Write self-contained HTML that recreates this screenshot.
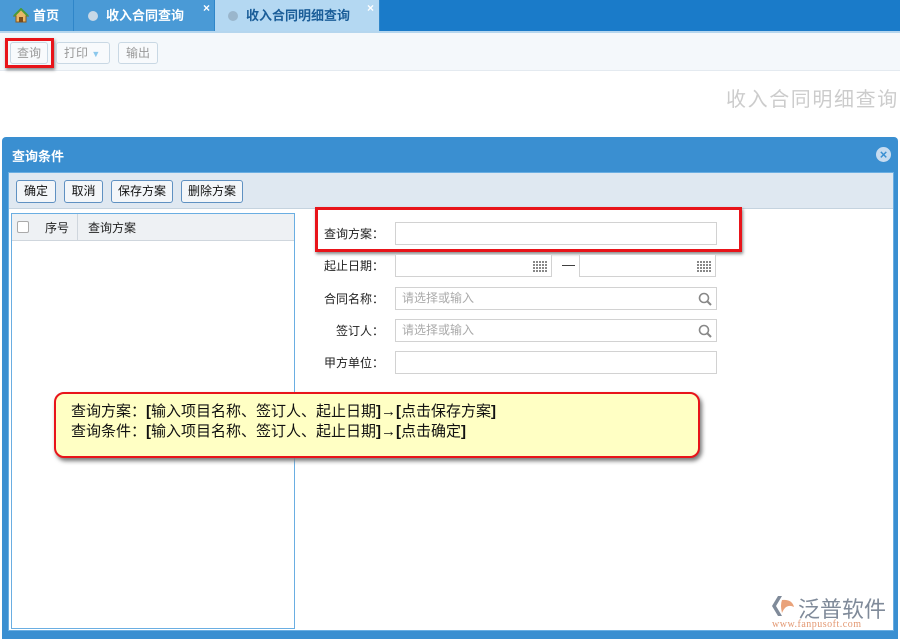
<!DOCTYPE html>
<html><head><meta charset="utf-8"><style>
*{margin:0;padding:0;box-sizing:border-box}
body{width:900px;height:640px;background:#fff;position:relative;overflow:hidden;font-family:"Liberation Sans","Noto Sans CJK SC",sans-serif;font-size:12px;color:#222}
.abs{position:absolute}
.tabbar{left:0;top:0;width:900px;height:31px;background:#1a7bc9}
.tab{top:0;height:31px;font-weight:bold;font-size:13px;line-height:32px;color:#fff;background:#4a9ad6;border-right:1px solid #2f86c9}
.tb{top:31px;left:0;width:900px;height:40px;background:#f4f8fb;border-top:2px solid #b5d6ee;border-bottom:1px solid #e4eaf0}
.btn{height:22px;border:1px solid #c9d8e4;border-radius:3px;color:#999;font-size:12px;line-height:20px;text-align:center;background:#f8fafc}
.dlg{left:2px;top:137px;width:896px;height:502px;background:#3a8fd1;border-radius:4px 4px 0 0}
.dbtn{top:180px;height:23px;border:1px solid #5f91c2;border-radius:3px;background:#f3f6f9;font-size:12px;line-height:21px;text-align:center;color:#111}
.lbl{left:318px;width:66px;text-align:right;font-size:12px}
.inp{left:395px;height:23px;border:1px solid #d2d2d2;background:#fff;color:#aaa;padding-left:6px;line-height:21px;font-size:12px}
.cal{position:absolute;right:3px;top:5px;width:15px;height:12px;background:repeating-linear-gradient(90deg,#888 0 2px,transparent 2px 3px),#fff;-webkit-mask:repeating-linear-gradient(0deg,#000 0 2px,transparent 2px 3px)}
</style></head><body>
<div class="abs tabbar"></div>
<div class="abs tab" style="left:0;width:74px;padding-left:33px;background:#4a9ad6">首页</div>
<svg class="abs" style="left:13px;top:8px" width="16" height="15"><path d="M8 1 L1 8 L3 8 L3 14 L13 14 L13 8 L15 8Z" fill="#e8b868" stroke="#8a5a20" stroke-width="1"/><rect x="6" y="9" width="4" height="5" fill="#7a4a1a"/><path d="M1 8 L8 1 L15 8" fill="none" stroke="#4a9a3a" stroke-width="2"/></svg>
<div class="abs tab" style="left:74px;width:141px;padding-left:14px"><span style="display:inline-block;width:10px;height:10px;border-radius:50%;background:#c8d8e6;vertical-align:-1px;margin-right:8px"></span>收入合同查询<span style="position:absolute;right:4px;top:-8px;font-size:12px">×</span></div>
<div class="abs tab" style="left:215px;width:165px;padding-left:13px;background:#b4d8f2;color:#1a5d98"><span style="display:inline-block;width:10px;height:10px;border-radius:50%;background:#9ab6cc;vertical-align:-1px;margin-right:8px"></span>收入合同明细查询<span style="position:absolute;right:5px;top:-8px;font-size:12px;color:#fff">×</span></div>
<div class="abs tb"></div>
<div class="abs" style="left:5px;top:38px;width:49px;height:30px;border:3px solid #e8141a;box-shadow:1px 2px 3px #888"></div>
<div class="abs btn" style="left:10px;top:42px;width:38px">查询</div>
<div class="abs btn" style="left:56px;top:42px;width:54px;text-align:left;padding-left:7px">打印 <span style="color:#8cc8ec;font-size:9px">▼</span></div>
<div class="abs btn" style="left:118px;top:42px;width:40px">输出</div>
<div class="abs" style="left:726px;top:83px;font-size:20px;color:#ccc;letter-spacing:1.6px">收入合同明细查询</div>

<div class="abs dlg"></div>
<div class="abs" style="left:12px;top:146px;color:#fff;font-weight:bold;font-size:13px">查询条件</div>
<div class="abs" style="left:876px;top:147px;width:15px;height:15px;border-radius:50%;background:#c7dcf0;color:#3a8fd1;font-size:13px;line-height:15px;text-align:center;font-weight:bold">×</div>
<div class="abs" style="left:8px;top:172px;width:886px;height:459px;background:#fff;border:1px solid #6aaee2"></div>
<div class="abs" style="left:9px;top:173px;width:884px;height:36px;background:#dfe8f1;border-bottom:1px solid #c5d3df"></div>
<div class="abs dbtn" style="left:16px;width:40px">确定</div>
<div class="abs dbtn" style="left:64px;width:39px">取消</div>
<div class="abs dbtn" style="left:111px;width:62px">保存方案</div>
<div class="abs dbtn" style="left:181px;width:62px">删除方案</div>

<div class="abs" style="left:11px;top:213px;width:284px;height:416px;border:1px solid #6aaee2;background:#fff"></div>
<div class="abs" style="left:12px;top:214px;width:282px;height:27px;background:#eef1f4;border-bottom:1px solid #cfd6dd"></div>
<div class="abs" style="left:17px;top:221px;width:12px;height:12px;border:1px solid #aaa;border-radius:2px;background:#fff"></div>
<div class="abs" style="left:77px;top:214px;width:1px;height:27px;background:#cfd6dd"></div>
<div class="abs" style="left:45px;top:219px;font-size:12px">序号</div>
<div class="abs" style="left:88px;top:219px;font-size:12px">查询方案</div>

<div class="abs lbl" style="top:225px">查询方案：</div>
<div class="abs inp" style="top:222px;width:322px"></div>
<div class="abs" style="left:315px;top:207px;width:427px;height:45px;border:3px solid #e8141a;box-shadow:1px 2px 3px #888"></div>
<div class="abs lbl" style="top:257px">起止日期：</div>
<div class="abs inp" style="top:254px;width:157px"><span class="cal"></span></div>
<div class="abs" style="left:562px;top:257px;font-size:13px">—</div>
<div class="abs inp" style="left:579px;top:254px;width:137px"><span class="cal"></span></div>
<div class="abs lbl" style="top:290px">合同名称：</div>
<div class="abs inp" style="top:287px;width:322px">请选择或输入<svg style="position:absolute;right:4px;top:4px" width="14" height="14"><circle cx="6" cy="6" r="4.5" fill="none" stroke="#888" stroke-width="1.6"/><path d="M9 9 L13 13" stroke="#888" stroke-width="2"/></svg></div>
<div class="abs lbl" style="top:322px">签订人：</div>
<div class="abs inp" style="top:319px;width:322px">请选择或输入<svg style="position:absolute;right:4px;top:4px" width="14" height="14"><circle cx="6" cy="6" r="4.5" fill="none" stroke="#888" stroke-width="1.6"/><path d="M9 9 L13 13" stroke="#888" stroke-width="2"/></svg></div>
<div class="abs lbl" style="top:354px">甲方单位：</div>
<div class="abs inp" style="top:351px;width:322px"></div>

<div class="abs" style="left:54px;top:392px;width:646px;height:66px;background:#ffffc4;border:2px solid #e8141a;border-radius:10px;box-shadow:2px 3px 4px #777;padding:8px 0 0 15px;font-size:15px;line-height:20px;color:#111">查询方案：<b>[</b>输入项目名称、签订人、起止日期<b>]</b>→<b>[</b>点击保存方案<b>]</b><br>查询条件：<b>[</b>输入项目名称、签订人、起止日期<b>]</b>→<b>[</b>点击确定<b>]</b></div>

<div class="abs" style="left:770px;top:595px;width:26px;height:22px">
<svg width="26" height="22"><path d="M8 1 L2 11 L8 21 L12 21 L6 11 L12 1Z" fill="#7f8a99"/><path d="M12 5 Q22 4 24 12 Q16 8 12 18 Q10 10 12 5Z" fill="#e9a27a"/></svg></div>
<div class="abs" style="left:798px;top:592px;font-size:22px;color:#7f8a99">泛普软件</div>
<div class="abs" style="left:772px;top:619px;font-size:10px;color:#e39872;font-family:'Liberation Serif',serif;letter-spacing:0.5px">www.fanpusoft.com</div>
</body></html>
